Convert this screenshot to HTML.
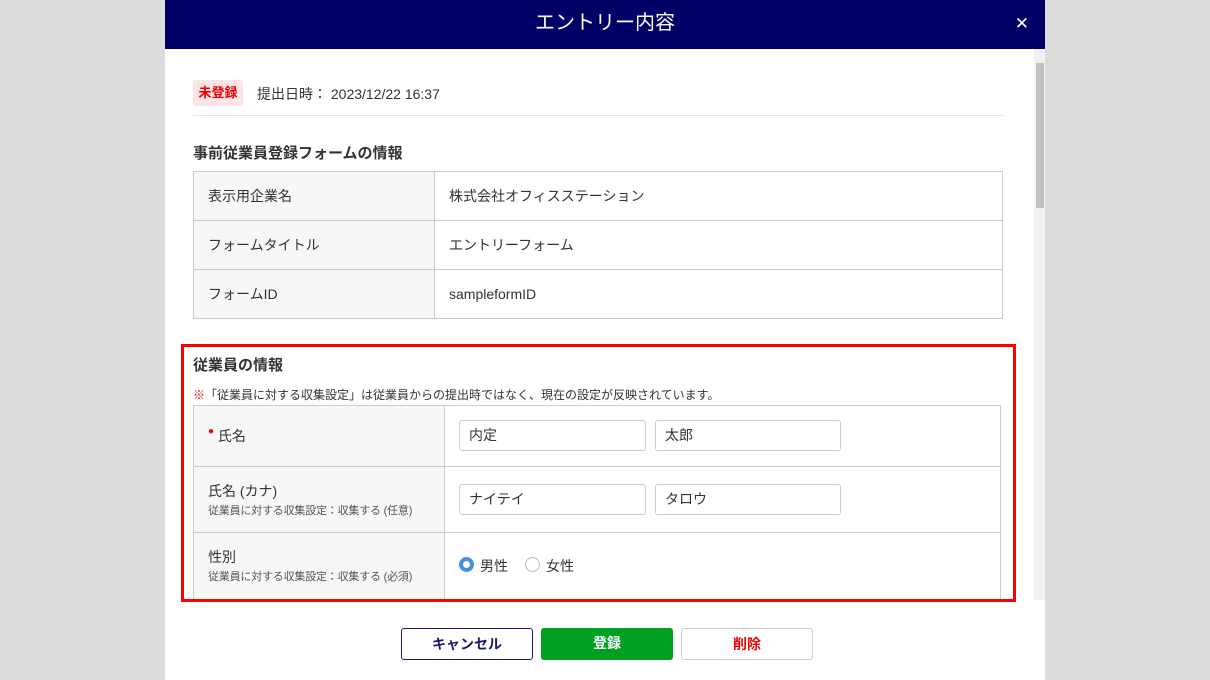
<!DOCTYPE html>
<html><head><meta charset="utf-8"><style>
*{box-sizing:border-box;margin:0;padding:0}
body{width:1210px;height:680px;background:#dcdcdc;font-family:"Liberation Sans","Noto Sans CJK JP",sans-serif;position:relative;overflow:hidden;color:#333}
.modal{position:absolute;left:165px;top:0;width:880px;height:680px;background:#fff}
.hdr{height:49px;background:#000066;color:#fff;font-size:20px;text-align:center;line-height:47px;position:relative}
.hdr .x{position:absolute;right:16px;top:0;font-size:17px}
.sb{position:absolute;left:869px;top:49px;width:11px;height:551px;background:#f1f1f1}
.sb i{position:absolute;left:2px;top:14px;width:8px;height:145px;background:#c1c1c1}
.abs{position:absolute}
.badge{left:28px;top:80px;width:50px;height:26px;background:#fde4e4;color:#e00;font-size:13px;font-weight:bold;line-height:26px;text-align:center;border-radius:3px}
table{border-collapse:collapse;position:absolute;font-size:14px}
td{border:1px solid #ccc;padding:0 14px;white-space:nowrap}
td.l{background:#f7f7f7}
.s{font-size:11px;color:#555;letter-spacing:-0.2px}
.inp{position:absolute;height:31px;border:1px solid #ccc;border-radius:3px;font-size:14px;line-height:29px;padding-left:9px;color:#333}
.btn{position:absolute;top:628px;height:32px;border-radius:3px;font-size:14px;font-weight:bold;text-align:center;line-height:30px}
</style></head><body>
<div class="modal">
<div class="hdr">エントリー内容<span class="x">✕</span></div>
<div class="sb"><i></i></div>
<div class="abs badge">未登録</div>
<div class="abs" style="left:92px;top:84px;font-size:14px">提出日時： 2023/12/22 16:37</div>
<div class="abs" style="left:28px;top:115px;width:810px;height:1px;background:#e3e3e3"></div>
<div class="abs" style="left:28px;top:142px;font-size:15px;font-weight:bold">事前従業員登録フォームの情報</div>
<table style="left:28px;top:171px;width:810px">
<tr style="height:49px"><td class="l" style="width:241px">表示用企業名</td><td>株式会社オフィスステーション</td></tr>
<tr style="height:49px"><td class="l">フォームタイトル</td><td>エントリーフォーム</td></tr>
<tr style="height:49px"><td class="l">フォームID</td><td>sampleformID</td></tr>
</table>
<div class="abs" style="left:28px;top:354px;font-size:15px;font-weight:bold">従業員の情報</div>
<div class="abs" style="left:28px;top:386px;font-size:12px"><span style="color:#e00">※</span>「従業員に対する収集設定」は従業員からの提出時ではなく、現在の設定が反映されています。</div>
<table style="left:28px;top:405px;width:808px">
<tr style="height:61px"><td class="l" style="width:251px"><span style="color:#e00;font-size:10px;vertical-align:top">●</span> 氏名</td><td></td></tr>
<tr style="height:66px"><td class="l">氏名 (カナ)<br><span class="s">従業員に対する収集設定：収集する (任意)</span></td><td></td></tr>
<tr style="height:70px"><td class="l" style="vertical-align:top;padding-top:14px">性別<br><span class="s">従業員に対する収集設定：収集する (必須)</span></td><td></td></tr>
</table>
<div class="inp" style="left:294px;top:420px;width:187px">内定</div>
<div class="inp" style="left:490px;top:420px;width:186px">太郎</div>
<div class="inp" style="left:294px;top:484px;width:187px">ナイテイ</div>
<div class="inp" style="left:490px;top:484px;width:186px">タロウ</div>
<div class="abs" style="left:294px;top:557px;width:15px;height:15px;border-radius:50%;border:4px solid #4a90e2"></div>
<div class="abs" style="left:315px;top:556px;font-size:14px">男性</div>
<div class="abs" style="left:360px;top:557px;width:15px;height:15px;border-radius:50%;border:1px solid #bbb"></div>
<div class="abs" style="left:381px;top:556px;font-size:14px">女性</div>
<div class="abs" style="left:0;top:600px;width:880px;height:80px;background:#fff"></div>
<div class="abs" style="left:16px;top:344px;width:835px;height:258px;border:3px solid #f00"></div>
<div class="btn" style="left:236px;width:132px;border:1px solid #1a1a66;color:#1a1a66">キャンセル</div>
<div class="btn" style="left:376px;width:132px;background:#00a023;color:#fff">登録</div>
<div class="btn" style="left:516px;width:132px;border:1px solid #ccc;color:#e00">削除</div>
</div>
</body></html>
